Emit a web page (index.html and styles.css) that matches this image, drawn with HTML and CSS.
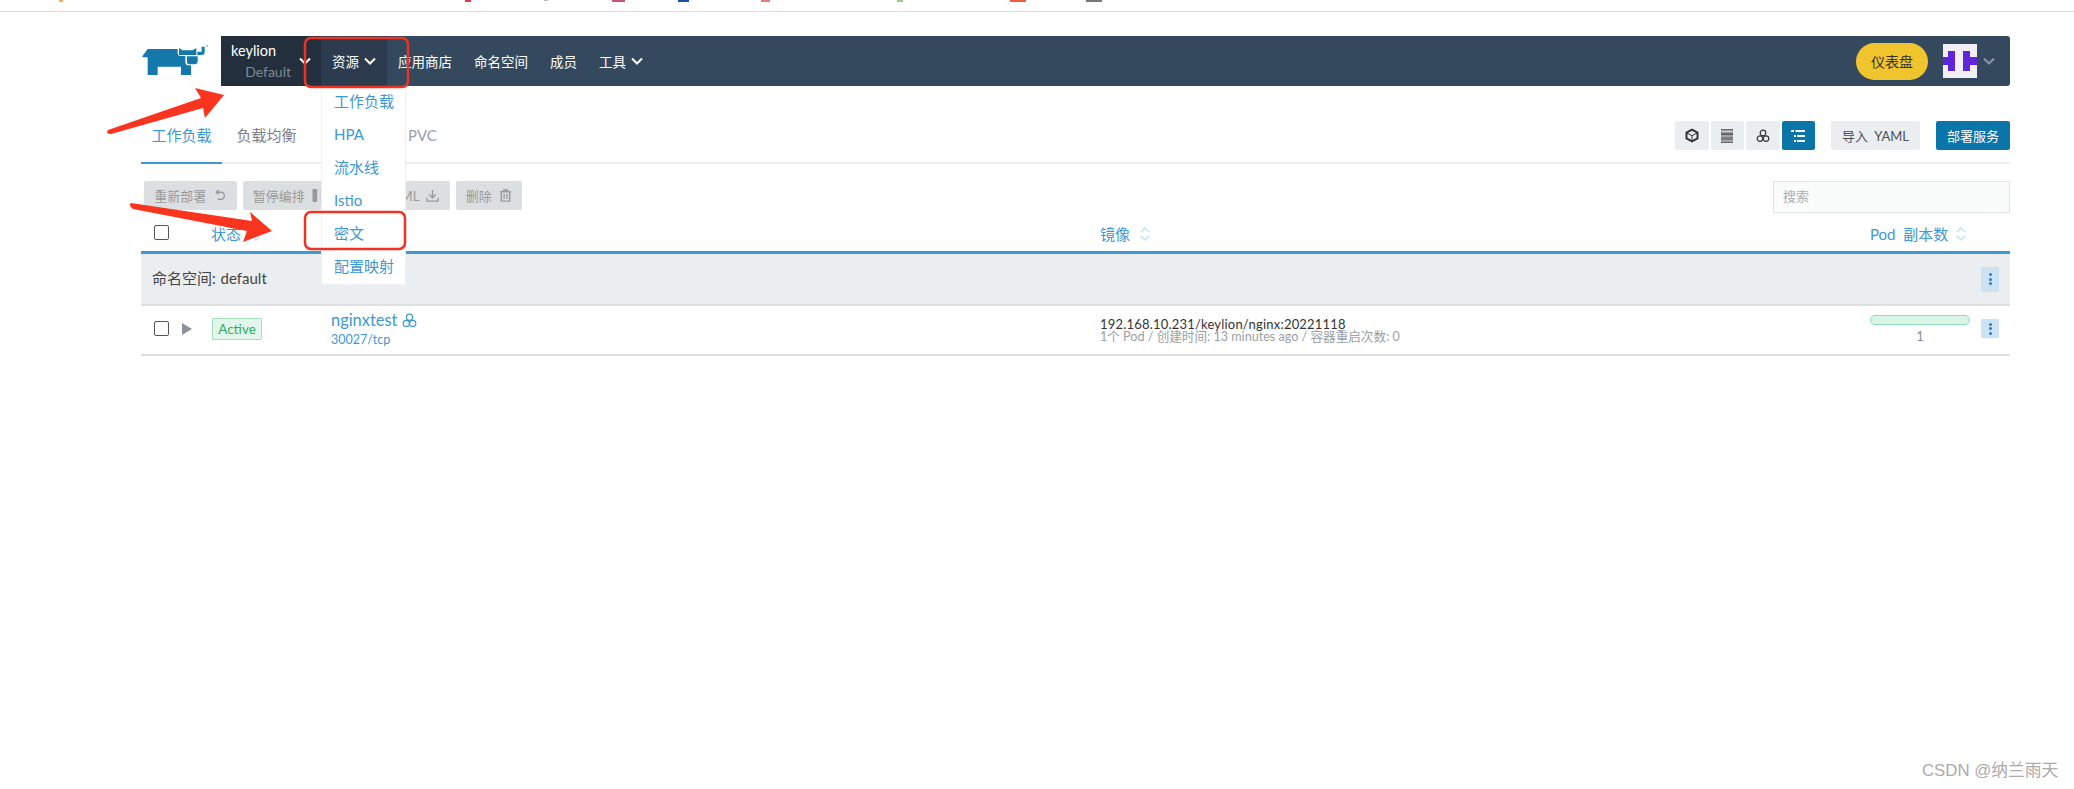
FILE: index.html
```html
<!DOCTYPE html>
<html lang="zh-CN">
<head>
  <meta charset="UTF-8">
  <title>工作负载</title>
  <link rel="stylesheet" href="styles.css">
</head>
<body>
  <svg class="tab-strip" width="2074" height="11" viewBox="0 0 2074 11">
    <rect x="59" y="0" width="4" height="2" fill="#f5b04c"/>
    <rect x="465" y="0" width="6" height="2" fill="#e8394a"/>
    <rect x="544" y="0" width="4" height="1" fill="#bbb"/>
    <rect x="612" y="0" width="13" height="2" fill="#c4527a"/>
    <rect x="678" y="0" width="11" height="2" fill="#1b4fa0"/>
    <rect x="761" y="0" width="9" height="2" fill="#e8807a"/>
    <rect x="897" y="0" width="6" height="2" fill="#9acb8e"/>
    <rect x="1010" y="0" width="16" height="2" fill="#f0603c"/>
    <rect x="1086" y="0" width="16" height="2" fill="#777"/>
  </svg>

  <div class="page">
    <header class="topbar">
      <svg class="logo" viewBox="0 0 240 120" width="80" height="40">
        <path fill="#1478ab" d="M18 50 L35 27 H125 V38 Q125 48 135 48 H148 V65 Q148 76 158 76 H165 V105 H135 V80 H65 V105 H35 V52 H24 Z"/>
        <path fill="#1478ab" d="M129 24 L140 31 H170 L181 24 V45 H129 Z"/>
        <path fill="#1478ab" d="M153 49 H185 V64 Q185 73 175 73 H162 Q153 73 153 65 Z"/>
        <path fill="#1478ab" d="M184 35 H197 V20 H206 V36 Q206 45 197 45 H184 Z"/>
        <circle cx="213" cy="18" r="3" fill="#8db9d2"/>
      </svg>
      <nav class="nav">
        <div class="project">
          <div class="project-names">
            <span class="project-cluster">keylion</span>
            <span class="project-name">Default</span>
          </div>
          <svg class="chev chev-project" viewBox="0 0 12 8"><path d="M1 1.500 6 6.500 11 1.500"/></svg>
        </div>
        <div class="nav-item nav-item-active">资源 <svg class="chev" viewBox="0 0 12 8"><path d="M1 1.500 6 6.500 11 1.500"/></svg></div>
        <div class="nav-item">应用商店</div>
        <div class="nav-item">命名空间</div>
        <div class="nav-item">成员</div>
        <div class="nav-item">工具 <svg class="chev" viewBox="0 0 12 8"><path d="M1 1.500 6 6.500 11 1.500"/></svg></div>
        <div class="nav-right">
          <button class="btn-dashboard">仪表盘</button>
          <svg class="avatar" viewBox="0 0 34 34" width="34" height="34">
            <rect width="34" height="34" fill="#f1eff3"/>
            <path fill="#5f26d9" d="M5 7H12V27H5V21H0V13H5Z M20 7H27V13H34V21H27V27H20Z"/>
          </svg>
          <svg class="chev chev-user" viewBox="0 0 12 8"><path d="M1 1.500 6 6.500 11 1.500"/></svg>
        </div>
      </nav>
    </header>

    <section class="subhead">
      <div class="tabs">
        <div class="tab tab-active">工作负载</div>
        <div class="tab">负载均衡</div>
        <div class="tab tab-covered"></div>
        <div class="tab tab-pvc">PVC</div>
      </div>
      <div class="actions">
        <div class="view-group">
          <button class="view-btn">
            <svg viewBox="0 0 14 14" width="14" height="15"><path fill="none" stroke="#333" stroke-width="2" d="M7 1.200 12.500 4.200V9.800L7 12.800 1.500 9.800V4.200Z"/><path fill="none" stroke="#333" stroke-width="1" d="M2 4.500 7 7.200 12 4.500 M7 7.200V12.500"/></svg>
          </button>
          <button class="view-btn">
            <svg viewBox="0 0 12 14" width="12" height="14"><rect width="12" height="14" fill="#a2a2a2"/><path stroke="#666" stroke-width="1" d="M0 .5H12 M0 4.500H12 M0 5.500H12 M0 9H12 M0 10H12 M0 13.500H12"/><path stroke="#ccc" stroke-width="1" d="M1 2.500H11"/></svg>
          </button>
          <button class="view-btn">
            <svg viewBox="0 0 14 14" width="14" height="14"><g fill="none" stroke="#333" stroke-width="1.200"><circle cx="7" cy="4" r="2.800"/><circle cx="4" cy="9.600" r="2.800"/><circle cx="10" cy="9.600" r="2.800"/></g></svg>
          </button>
          <button class="view-btn view-btn-on">
            <svg viewBox="0 0 14 12" width="14" height="12"><path fill="#fff" d="M0 0H3V2H0Z M4.500 0H14V2H4.500Z M3 5H5V7H3Z M6 5H14V7H6Z M3 10H5V12H3Z M6 10H14V12H6Z"/></svg>
          </button>
        </div>
        <button class="btn btn-light">导入 YAML</button>
        <button class="btn btn-primary">部署服务</button>
      </div>
    </section>

    <section class="toolbar">
      <div class="bulk">
        <button class="bulk-btn">重新部署
          <svg viewBox="0 0 14 14" width="13" height="13"><path fill="none" stroke="#999" stroke-width="1.500" d="M4 3.500H8.500A3.700 3.700 0 0 1 8.500 11H5 M6 1 3.500 3.500 6 6"/></svg>
        </button>
        <button class="bulk-btn">暂停编排
          <svg viewBox="0 0 14 14" width="14" height="13"><path fill="#999" d="M0 0H5V14H0Z M9 0H14V14H9Z"/></svg>
        </button>
        <button class="bulk-btn bulk-btn-yaml">下载 YAML
          <svg viewBox="0 0 14 14" width="13" height="13"><path fill="none" stroke="#999" stroke-width="1.500" d="M7 1V9 M3.500 6 7 9.500 10.500 6 M1 9.500V13H13V9.500"/></svg>
        </button>
        <button class="bulk-btn">删除
          <svg viewBox="0 0 14 14" width="13" height="13"><path fill="none" stroke="#999" stroke-width="1.500" d="M1 3H13 M5 3V1H9V3 M2.500 3V13H11.500V3 M5.500 5.500V10.500 M8.500 5.500V10.500"/></svg>
        </button>
      </div>
      <input class="search" type="text" placeholder="搜索">
    </section>

    <section class="table">
      <div class="grid-row table-head">
        <div class="cell-check"><span class="checkbox"></span></div>
        <div class="th">状态 <svg class="sort" viewBox="0 0 10 16"><path d="M1 6 5 2 9 6 M1 10 5 14 9 10"/></svg></div>
        <div class="th">名称</div>
        <div class="th th-image">镜像 <svg class="sort" viewBox="0 0 10 16"><path d="M1 6 5 2 9 6 M1 10 5 14 9 10"/></svg></div>
        <div class="th th-pods">Pod 副本数 <svg class="sort" viewBox="0 0 10 16"><path d="M1 6 5 2 9 6 M1 10 5 14 9 10"/></svg></div>
      </div>
      <div class="group-row">
        <span class="group-name">命名空间: default</span>
        <button class="more more-tall"><i></i><i></i><i></i></button>
      </div>
      <div class="grid-row data-row">
        <div class="cell-check">
          <span class="checkbox"></span>
          <svg class="expand" viewBox="0 0 10 12" width="10" height="12"><path fill="#8a939b" d="M0 0 10 6 0 12Z"/></svg>
        </div>
        <div class="cell-state"><span class="badge">Active</span></div>
        <div class="cell-name">
          <div class="name-line">nginxtest
            <svg viewBox="0 0 14 14" width="15" height="15"><g fill="none" stroke="#3d98d3" stroke-width="1.100"><circle cx="7" cy="4" r="2.900"/><circle cx="4" cy="9.700" r="2.900"/><circle cx="10" cy="9.700" r="2.900"/></g></svg>
          </div>
          <div class="port-line">30027/tcp</div>
        </div>
        <div class="cell-image">
          <div class="image-name">192.168.10.231/keylion/nginx:20221118</div>
          <div class="image-meta">1个 Pod / 创建时间: 13 minutes ago / 容器重启次数: 0</div>
        </div>
        <div class="cell-pods">
          <div class="pod-bar"></div>
          <div class="pod-count">1</div>
        </div>
        <div class="cell-more"><button class="more"><i></i><i></i><i></i></button></div>
      </div>
    </section>
  </div>

  <div class="dropdown">
    <div class="dropdown-item">工作负载</div>
    <div class="dropdown-item">HPA</div>
    <div class="dropdown-item">流水线</div>
    <div class="dropdown-item">Istio</div>
    <div class="dropdown-item">密文</div>
    <div class="dropdown-item">配置映射</div>
  </div>

  <!-- screenshot annotations -->
  <svg class="marks" width="2074" height="789" viewBox="0 0 2074 789">
    <rect x="305" y="38" width="103" height="49" rx="6" fill="none" stroke="#ee3224" stroke-width="2.500"/>
    <rect x="305" y="212" width="100" height="37" rx="6" fill="none" stroke="#ee3224" stroke-width="2.500"/>
    <path fill="#fb3420" d="M108 130 L201 98 L195 88 L224 95 L205 118 L203 108 L111 134 Q105 134 108 130Z"/>
    <path fill="#fb3420" d="M131 203 L252 221 L250 212 L272 231 L243 242 L247 231 L133 209 Q128 205 131 203Z"/>
  </svg>

  <div class="watermark">CSDN @纳兰雨天</div>
</body>
</html>
```

FILE: styles.css
```css
html, body {
  margin: 0;
  padding: 0;
  background: #fff;
}

body {
  width: 2074px;
  height: 789px;
  overflow: hidden;
  position: relative;
  font-family: 'Lato', 'Noto Sans CJK SC', sans-serif;
  font-size: 13px;
  color: #333;
}

button {
  font-family: inherit;
  border: none;
  padding: 0;
}

.tab-strip {
  display: block;
  border-bottom: 1px solid #ddd;
}

.page {
  padding: 24px 64px 0 141px;
}

/* top bar */
.topbar {
  display: flex;
  align-items: center;
  height: 50px;
}

.logo {
  flex: none;
  margin: -2px 5px 0 -5px;
}

.nav {
  flex: 1;
  height: 50px;
  display: flex;
  align-items: center;
  background: #35495e;
  color: #fff;
  border-radius: 0 3px 3px 0;
}

.project {
  width: 100px;
  height: 100%;
  box-sizing: border-box;
  padding-left: 10px;
  display: flex;
  align-items: center;
  gap: 8px;
  background: #232f3c;
}

.project-names {
  display: flex;
  flex-direction: column;
  width: 60px;
}

.project-cluster {
  font-size: 14.500px;
  line-height: 21px;
}

.project-name {
  font-size: 14px;
  line-height: 21px;
  color: #7f8a95;
  text-align: right;
}

.chev {
  width: 12px;
  height: 8px;
  fill: none;
  stroke: #fff;
  stroke-width: 2;
}

.nav-item {
  display: flex;
  align-items: center;
  gap: 5px;
  height: 100%;
  padding: 0 11px;
  font-size: 13.500px;
  white-space: nowrap;
}

.nav-item-active {
  padding: 0 11px;
  background: #2c3b4e;
}

.nav-right {
  margin-left: auto;
  display: flex;
  align-items: center;
  padding-right: 15px;
}

.btn-dashboard {
  width: 72px;
  height: 37px;
  border-radius: 19px;
  background: #f0c42c;
  color: #333;
  font-size: 14px;
  margin-right: 15px;
}

.avatar {
  display: block;
  margin-right: 6px;
}

.chev-user {
  stroke: #8b97a3;
}

/* tabs */
.subhead {
  display: flex;
  justify-content: space-between;
  margin-top: 35px;
  border-bottom: 2px solid #ebeef0;
}

.tabs {
  display: flex;
  gap: 4px;
}

.tab {
  padding: 0 10.500px;
  line-height: 28px;
  font-size: 15px;
  color: #7c8288;
  margin-bottom: -2px;
  height: 41px;
  border-bottom: 2px solid transparent;
}

.tab-active {
  width: 60px;
  color: #3d98d3;
  border-bottom-color: #3d98d3;
}

.tab-covered {
  width: 60px;
}

.tab-pvc {
  padding-left: 12px;
  color: #98a0a6;
}

.actions {
  display: flex;
  align-items: flex-start;
  padding-bottom: 12px;
}

.view-group {
  display: flex;
  gap: 2px;
  margin-right: 16px;
}

.view-btn {
  width: 33.500px;
  height: 29px;
  background: #ebeef0;
  border-radius: 2px;
  display: flex;
  align-items: center;
  justify-content: center;
}

.view-btn-on {
  background: #0975a8;
}

.btn {
  height: 29px;
  border-radius: 2px;
  font-size: 13px;
}

.btn-light {
  width: 89px;
  background: #ebeef0;
  color: #4a4f55;
  word-spacing: 3px;
  margin-right: 16px;
}

.btn-primary {
  width: 74px;
  background: #0975a8;
  color: #fff;
}

/* bulk bar */
.toolbar {
  display: flex;
  justify-content: space-between;
  align-items: flex-start;
  margin-top: 17px;
  height: 33px;
}

.bulk {
  display: flex;
  gap: 6px;
  padding-left: 3px;
}

.bulk-btn {
  height: 29px;
  padding: 0 10.250px;
  display: flex;
  align-items: center;
  gap: 7px;
  background: #dcdfe1;
  color: #9a9a9a;
  font-size: 13px;
  border-radius: 2px;
  white-space: nowrap;
}

.bulk-btn-yaml {
  word-spacing: 3px;
}

.search {
  width: 237px;
  height: 32px;
  box-sizing: border-box;
  padding: 0 9px 2px;
  border: 1px solid #dde3e6;
  background: #fafbfb;
  font-family: inherit;
  font-size: 13px;
  outline: none;
}

.search::placeholder {
  color: #aab0b5;
}

/* table */
.grid-row {
  display: grid;
  grid-template-columns: 71px 119px 769px 770px 111px 29px;
  align-items: center;
}

.table-head {
  height: 37px;
  border-bottom: 3px solid #3d98d3;
  color: #3d98d3;
  font-size: 15px;
}

.th {
  display: flex;
  align-items: center;
  gap: 10px;
  padding-top: 2px;
  white-space: nowrap;
  margin-left: -1px;
}

.th-image {
  margin-left: 0;
}

.th-pods {
  margin-left: 0;
  gap: 8px;
  word-spacing: 4px;
}

.sort {
  width: 10px;
  height: 16px;
  flex: none;
  fill: none;
  stroke: #c6e0f2;
  stroke-width: 1.500;
}

.cell-check {
  display: flex;
  align-items: center;
  gap: 13px;
  padding-left: 13px;
}

.data-row .cell-check {
  margin-top: -3px;
}

.checkbox {
  width: 13px;
  height: 13px;
  border: 1px solid #555;
  border-radius: 2px;
  background: #fff;
  flex: none;
}

.group-row {
  height: 50px;
  padding: 0 11px;
  display: flex;
  align-items: center;
  justify-content: space-between;
  background: #ebeef0;
  border-bottom: 2px solid #dedfe1;
  font-size: 15px;
  color: #444;
}

.group-name {
  margin-top: -3px;
  word-spacing: 1px;
}

.more {
  width: 18px;
  height: 19px;
  background: #cce2f5;
  border-radius: 1px;
  display: flex;
  flex-direction: column;
  align-items: center;
  justify-content: center;
  gap: 1.500px;
}

.more-tall {
  height: 25px;
}

.more i {
  width: 3px;
  height: 3px;
  border-radius: 50%;
  background: #2a7fc0;
}

.data-row {
  height: 48px;
  border-bottom: 2px solid #dedfe1;
}

.cell-state {
  margin-top: -2px;
}

.badge {
  display: block;
  width: 50px;
  height: 22px;
  box-sizing: border-box;
  border: 1px solid #a6e0bd;
  border-radius: 1px;
  background: #e3f6eb;
  color: #2fae63;
  font-size: 13.500px;
  line-height: 20px;
  text-align: center;
}

.cell-name {
  margin-top: -1px;
}

.name-line {
  display: flex;
  align-items: center;
  gap: 5px;
  font-size: 16.400px;
  line-height: 20px;
  color: #3d98d3;
}

.port-line {
  font-size: 12.500px;
  line-height: 19px;
  color: #3d98d3;
}

.image-name {
  font-size: 13px;
  line-height: 13px;
  letter-spacing: .2px;
  color: #333;
}

.image-meta {
  font-size: 12.600px;
  line-height: 12px;
  color: #9aa0a5;
}

.cell-pods {
  width: 100px;
}

.pod-bar {
  height: 10px;
  box-sizing: border-box;
  border: 1px solid #8fe0b4;
  border-radius: 5px;
  background: #d8f5e6;
  margin-bottom: 3px;
}

.pod-count {
  text-align: center;
  font-size: 13px;
  line-height: 17px;
  color: #8a9096;
}

.cell-more {
  margin-top: -3px;
}

/* open resource menu */
.dropdown {
  position: absolute;
  left: 321px;
  top: 86px;
  width: 85px;
  box-sizing: border-box;
  background: #fff;
  border: 1px solid #eef0f2;
  border-top: none;
}

.dropdown-item {
  height: 33px;
  line-height: 31px;
  padding-left: 12px;
  font-size: 15px;
  color: #3d98d3;
  white-space: nowrap;
}

.marks {
  position: absolute;
  left: 0;
  top: 0;
  pointer-events: none;
}

.watermark {
  position: absolute;
  left: 1922px;
  top: 761px;
  font-family: 'Liberation Sans', 'Noto Sans CJK SC', sans-serif;
  font-size: 16.800px;
  line-height: 20px;
  color: #ababab;
  white-space: nowrap;
}
```
